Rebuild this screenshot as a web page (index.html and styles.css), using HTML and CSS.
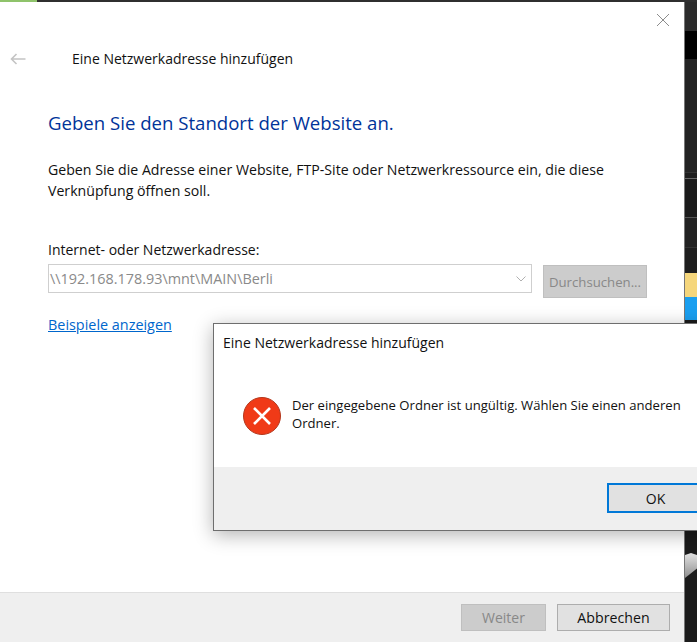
FILE: index.html
```html
<!DOCTYPE html>
<html lang="de">
<head>
<meta charset="utf-8">
<title>Eine Netzwerkadresse hinzufügen</title>
<link rel="stylesheet" href="styles.css">
</head>
<body>
<div class="topbar"><div class="topbar-green"></div></div>
<div class="screen">
  <main class="wizard">
    <div class="close-row">
      <svg class="close" width="14" height="14" viewBox="0 0 14 14"><path d="M1 1L13 13M13 1L1 13" stroke="#8c8c8c" stroke-width="1" fill="none"/></svg>
    </div>
    <div class="titlebar">
      <svg class="back" width="16" height="12" viewBox="0 0 16 12"><path d="M15.5 6H1.5M6.5 1L1.5 6L6.5 11" stroke="#c4c4c4" stroke-width="1.6" fill="none"/></svg>
      <span class="title">Eine Netzwerkadresse hinzufügen</span>
    </div>
    <div class="content">
      <h1 class="heading">Geben Sie den Standort der Website an.</h1>
      <p class="desc">Geben Sie die Adresse einer Website, FTP-Site oder Netzwerkressource ein, die diese Verknüpfung öffnen soll.</p>
      <label class="field-label">Internet- oder Netzwerkadresse:</label>
      <div class="field-row">
        <div class="combo">
          <span class="combo-text">\\192.168.178.93\mnt\MAIN\Berli</span>
          <svg class="chevron" width="10" height="6" viewBox="0 0 10 6"><path d="M0.5 0.5L5 5L9.5 0.5" stroke="#b0b0b0" stroke-width="1" fill="none"/></svg>
        </div>
        <div class="btn btn-disabled btn-browse">Durchsuchen...</div>
      </div>
      <a class="link">Beispiele anzeigen</a>
    </div>
    <footer class="footer">
      <div class="btn btn-disabled btn-next">Weiter</div>
      <div class="btn btn-cancel">Abbrechen</div>
    </footer>
  </main>
  <aside class="strip">
    <div class="s s1"></div>
    <div class="s s2"></div>
    <div class="s s3"></div>
    <div class="s s4"></div>
    <div class="s s5"></div>
    <div class="s s6"></div>
    <div class="s s7"></div>
    <div class="s s8"></div>
    <div class="s s9"></div>
    <div class="s s10"></div>
    <div class="s s11"></div>
  </aside>
</div>
<section class="dialog">
  <div class="dialog-title">Eine Netzwerkadresse hinzufügen</div>
  <div class="dialog-body">
    <svg class="error" width="38" height="38" viewBox="0 0 38 38"><circle cx="19" cy="19" r="18.5" fill="#f03a17" stroke="#b3371c" stroke-width="1"/><path d="M11 11L27 27M27 11L11 27" stroke="#fff" stroke-width="2.6" fill="none"/></svg>
    <p class="dialog-msg">Der eingegebene Ordner ist ungültig. Wählen Sie einen anderen Ordner.</p>
  </div>
  <div class="dialog-foot">
    <div class="btn btn-ok">OK</div>
  </div>
</section>
</body>
</html>
```

FILE: styles.css
```css
* { box-sizing: border-box; }
html, body { margin: 0; padding: 0; }
body {
  width: 697px;
  height: 642px;
  overflow: hidden;
  position: relative;
  background: #1b1b1b;
  font-family: "Open Sans", "Noto Sans", sans-serif;
  font-size: 14px;
  color: #111;
}
.topbar { height: 2px; background: #2f2f2f; }
.topbar-green { width: 37px; height: 2px; background: #8fc36b; }
.screen { display: flex; height: 640px; }
.wizard {
  width: 685px;
  background: #fff;
  display: flex;
  flex-direction: column;
  border-right: 1px solid #777;
}
.close-row { display: flex; justify-content: flex-end; padding: 11px 14px 0 0; height: 25px; }
.titlebar { display: flex; align-items: center; height: 21px; margin-top: 21px; padding-left: 10px; }
.back { margin-right: 46px; }
.title { font-size: 14px; }
.content { flex: 1; padding: 0 36px 0 48px; }
.heading { margin: 41px 0 0; font-size: 18.6px; font-weight: 400; color: #003399; line-height: 26px; }
.desc { margin: 23px 0 0; line-height: 21px; font-size: 14.15px; width: 590px; }
.field-label { display: block; margin-top: 39px; line-height: 20px; font-size: 14px; }
.field-row { display: flex; align-items: flex-start; margin-top: 4px; }
.combo {
  width: 484px; height: 29px; border: 1px solid #cfcfcf; display: flex; align-items: center; justify-content: space-between;
  padding: 0 5px 0 1px; color: #8a8a8a; font-size: 14.4px;
}
.btn { display: flex; align-items: center; justify-content: center; }
.btn-disabled { background: #cccccc; border: 1px solid #bfbfbf; color: #888; }
.btn-browse { width: 104px; height: 33px; margin: 1px 0 0 11px; font-size: 13.2px; }
.link { display: block; width: max-content; margin-top: 17px; color: #0066cc; text-decoration: underline; line-height: 20px; font-size: 14.4px; }
.footer {
  height: 50px; background: #efefef; border-top: 1px solid #dfdfdf;
  display: flex; justify-content: flex-end; align-items: flex-start; gap: 11px; padding: 11px 14px 0 0;
}
.btn-next { width: 85px; height: 27px; font-size: 14px; }
.btn-cancel { width: 113px; height: 27px; background: #e1e1e1; border: 1px solid #adadad; font-size: 14.2px; color: #111; }
.strip { width: 12px; display: flex; flex-direction: column; }
.s1 { height: 29px; background: #2b2b2b; }
.s2 { height: 28px; background: #000; }
.s3 { height: 114px; background: #232323; border-bottom: 1px solid #333; }
.s4 { height: 6px; background: #1d1d1d; border-bottom: 1px solid #666; }
.s5 { height: 39px; background: #1b1b1b; border-bottom: 1px solid #555; }
.s6 { height: 30px; background: #222; border-bottom: 1px solid #333; }
.s7 { height: 25px; background: #1e1e1e; }
.s8 { height: 24px; background: #f5d67c; }
.s9 { height: 23px; background: #1a9ff0; }
.s10 { height: 233px; background: #1b1b1b; }
.s11 { height: 25px; background: linear-gradient(#e2e2e2, #8f8f8f); clip-path: polygon(0 8%, 50% 0, 100% 8%, 100% 62%, 0 100%); }
.dialog {
  position: absolute; left: 213px; top: 323px; width: 500px; height: 208px;
  background: #fff; border: 1px solid #6e6e6e;
  box-shadow: 0 4px 18px rgba(0,0,0,.3);
  display: flex; flex-direction: column;
}
.dialog-title { height: 35px; padding: 9px 0 0 9px; font-size: 14px; line-height: 20px; }
.dialog-body { display: flex; height: 108px; padding: 38px 0 0 29px; }
.error { flex: none; }
.dialog-msg { margin: -1px 0 0 11px; width: 400px; line-height: 18px; font-size: 13.1px; }
.dialog-foot { flex: 1; background: #efefef; padding: 16px 0 0 393px; }
.btn-ok { width: 97px; height: 30px; background: #e1e1e1; border: 2px solid #0078d7; font-size: 14px; }
```
